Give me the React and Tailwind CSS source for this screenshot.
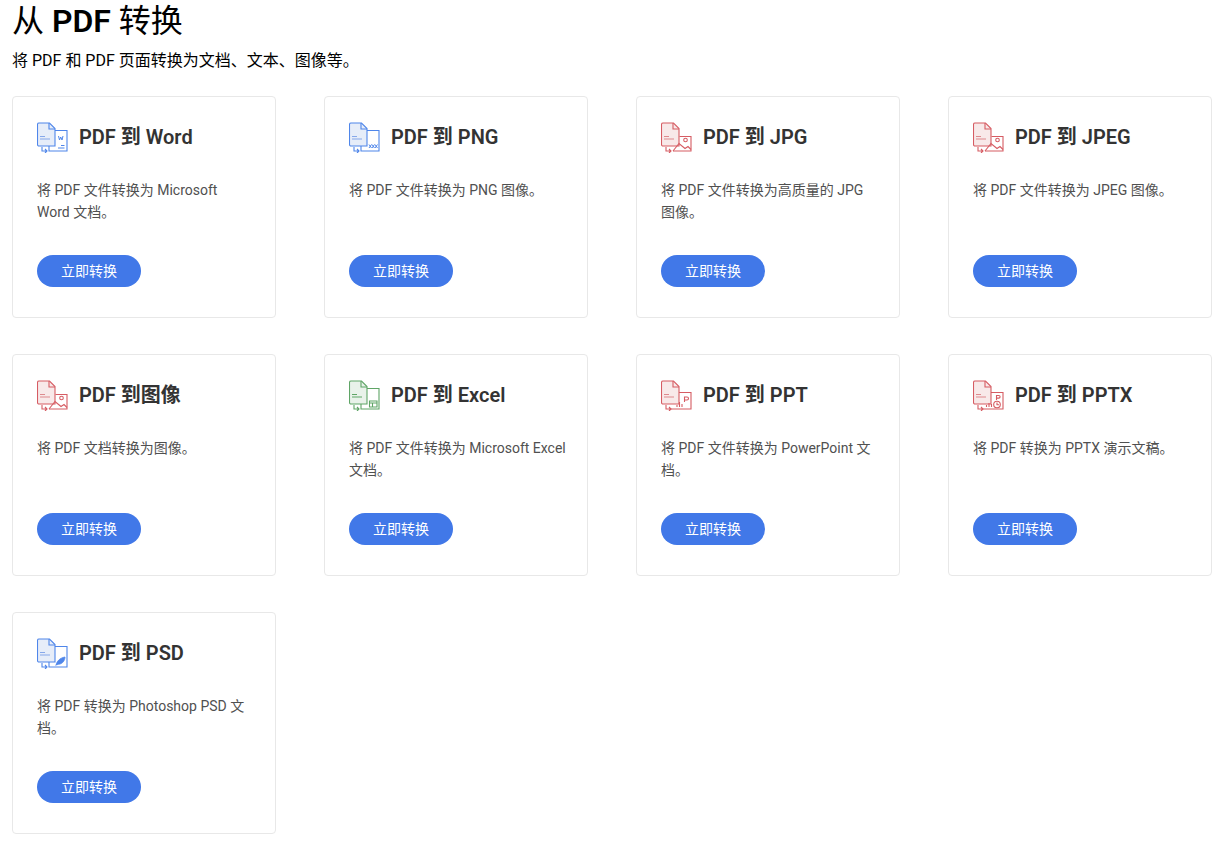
const palettes = {
  blue: { line: '#4f86ea', fill: '#e6edf9', mark: '#86a8ea' },
  red: { line: '#d65c63', fill: '#f8e9e9', mark: '#dd8a8e' },
  green: { line: '#5fa566', fill: '#e9f2ea', mark: '#5fa566' },
};

// small drawing inside the second page of each icon
function Glyph({ type, color }) {
  if (type === 'word') {
    return (
      <g fill="none" stroke={color} strokeWidth="1">
        <path d="M22.500 15l1 4 1.200-3 1.300 3 1-4" />
        <path d="M25 24.500h3.500M22 27h6.500" />
      </g>
    );
  }
  if (type === 'png') {
    return <path d="M21 23.500l2.500 3.500M23.500 23.500L21 27M24 23.500l2.500 3.500M26.500 23.500L24 27M27 23.500l2.500 3.500M29.500 23.500L27 27" fill="none" stroke={color} strokeWidth="1" />;
  }
  if (type === 'image') {
    return (
      <g fill="none" stroke={color} strokeWidth="1.100">
        <circle cx="25.500" cy="19" r="1.800" />
        <path d="M13 30l6-7.500 6 5 3-2 3 3" />
      </g>
    );
  }
  if (type === 'excel') {
    return <path d="M21.500 22h7.500v6h-7.500zM21.500 24h7.500M24.500 24v4" fill="none" stroke={color} strokeWidth="1.100" />;
  }
  if (type === 'ppt') {
    return (
      <g fill="none" stroke={color} strokeWidth="1.100">
        <path d="M24.500 23v-5h2.500a1.500 1.500 0 0 1 0 3h-2.500" />
        <path d="M17 28v-2M19.500 28v-5M22 28v-3" />
      </g>
    );
  }
  if (type === 'pptx') {
    return (
      <g fill="none" stroke={color} strokeWidth="1.100">
        <path d="M24.500 21v-4.500h2.300a1.300 1.300 0 0 1 0 2.600h-2.300" />
        <path d="M14.500 28v-2M17 28v-4M19.500 28v-3" />
        <circle cx="25" cy="25.500" r="3.300" />
        <path d="M25 23.500v2.200h2" />
      </g>
    );
  }
  return <path d="M20 28c.8-3.500 3.500-7 9-8 0 3.500-2.500 7-6.500 7.300zM19.500 28.500l4-4" fill={color} stroke={color} strokeWidth="0.800" />;
}

function FileIcon({ tone, type }) {
  const c = palettes[tone];
  let back = 'M13 9.500h18v20.500H13z';
  if (type === 'image') back = 'M19.500 15.500H31V30H13';
  if (type === 'ppt' || type === 'pptx') back = 'M19 13.500h12V30H11';
  return (
    <svg width="32" height="32" viewBox="1 0 32 32" className="shrink-0">
      <path d={back} fill="#fff" stroke={c.line} strokeWidth="1.100" />
      <path d="M3 2h10.500l5.500 5.500V25H3a1.500 1.500 0 0 1-1.500-1.500V3.500A1.500 1.500 0 0 1 3 2z" fill={c.fill} stroke={c.line} strokeWidth="1.100" />
      <path d="M13 2v6h6" fill="none" stroke={c.line} strokeWidth="1.100" />
      <path d="M4 15.500h5M4 18h10" fill="none" stroke={c.mark} strokeWidth="1.200" />
      <path d="M6 26v4h5M9 28l2 2-2 2" fill="none" stroke={c.line} strokeWidth="1.100" />
      <Glyph type={type} color={c.line} />
    </svg>
  );
}

const tools = [
  { title: 'PDF 到 Word', desc: '将 PDF 文件转换为 Microsoft\nWord 文档。', tone: 'blue', type: 'word' },
  { title: 'PDF 到 PNG', desc: '将 PDF 文件转换为 PNG 图像。', tone: 'blue', type: 'png' },
  { title: 'PDF 到 JPG', desc: '将 PDF 文件转换为高质量的 JPG\n图像。', tone: 'red', type: 'image' },
  { title: 'PDF 到 JPEG', desc: '将 PDF 文件转换为 JPEG 图像。', tone: 'red', type: 'image' },
  { title: 'PDF 到图像', desc: '将 PDF 文档转换为图像。', tone: 'red', type: 'image' },
  { title: 'PDF 到 Excel', desc: '将 PDF 文件转换为 Microsoft Excel\n文档。', tone: 'green', type: 'excel' },
  { title: 'PDF 到 PPT', desc: '将 PDF 文件转换为 PowerPoint 文\n档。', tone: 'red', type: 'ppt' },
  { title: 'PDF 到 PPTX', desc: '将 PDF 转换为 PPTX 演示文稿。', tone: 'red', type: 'pptx' },
  { title: 'PDF 到 PSD', desc: '将 PDF 转换为 Photoshop PSD 文\n档。', tone: 'blue', type: 'psd' },
];

function ToolCard({ tool }) {
  return (
    <div className="flex h-[222px] flex-col rounded border border-[#e8e8e8] bg-white pl-6 pr-[18px] pt-6">
      <div className="flex h-8 items-center gap-[10px]">
        <FileIcon tone={tool.tone} type={tool.type} />
        <h2 className="text-[20px] font-semibold leading-8 text-[#333333]">{tool.title}</h2>
      </div>
      <p className="mt-[26px] h-[66px] whitespace-pre-line text-sm leading-[22px] text-[#505050]">{tool.desc}</p>
      <button className="mt-[10px] h-8 w-[104px] rounded-full bg-[#4178e8] text-sm text-white">立即转换</button>
    </div>
  );
}

export default function App() {
  return (
    <div className="min-h-[841px] bg-white pl-3 pr-[18px] font-['Roboto','Noto_Sans_CJK_SC',sans-serif]">
      <h1 className="h-[44px] text-[32px] font-normal leading-[42px] text-black">
        从 <span className="font-semibold">PDF</span> 转换
      </h1>
      <p className="text-base leading-[34px] text-black">将 PDF 和 PDF 页面转换为文档、文本、图像等。</p>
      <div className="mt-[18px] grid grid-cols-4 gap-x-12 gap-y-9">
        {tools.map((tool) => (
          <ToolCard key={tool.title} tool={tool} />
        ))}
      </div>
    </div>
  );
}
